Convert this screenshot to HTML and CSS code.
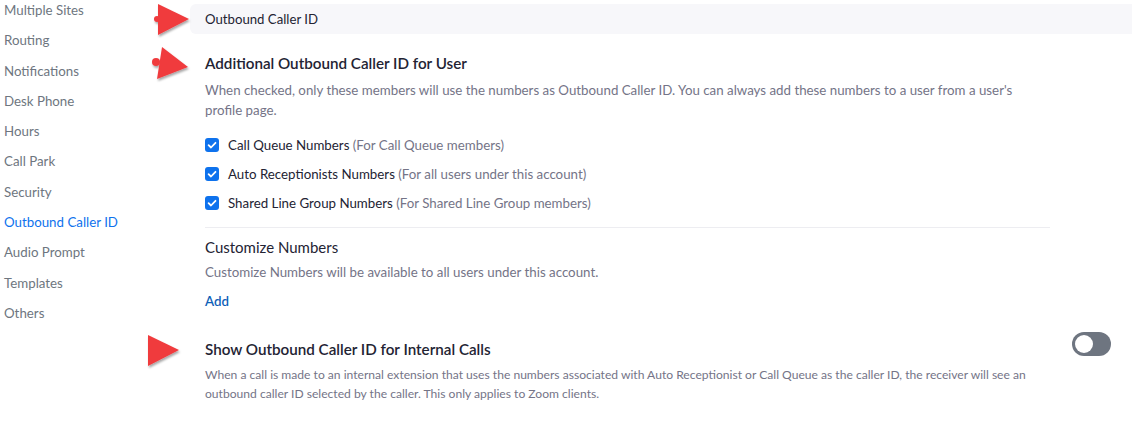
FILE: index.html
```html
<!DOCTYPE html>
<html>
<head>
<meta charset="utf-8">
<link rel="stylesheet" href="styles.css">
</head>
<body>
<div class="page">
  <nav class="sidebar">
    <div class="nav-item">Multiple Sites</div>
    <div class="nav-item">Routing</div>
    <div class="nav-item">Notifications</div>
    <div class="nav-item">Desk Phone</div>
    <div class="nav-item">Hours</div>
    <div class="nav-item">Call Park</div>
    <div class="nav-item">Security</div>
    <div class="nav-item active">Outbound Caller ID</div>
    <div class="nav-item">Audio Prompt</div>
    <div class="nav-item">Templates</div>
    <div class="nav-item">Others</div>
  </nav>
  <main class="main">
    <div class="section-header">Outbound Caller ID</div>

    <section class="setting">
      <h2 class="setting-title">Additional Outbound Caller ID for User</h2>
      <p class="setting-desc">When checked, only these members will use the numbers as Outbound Caller ID. You can always add these numbers to a user from a user's profile page.</p>
      <div class="checks">
        <label class="check-row"><span class="checkbox"><svg viewBox="0 0 14 14" width="14" height="14"><path d="M3.6 7.2 L6 9.5 L10.5 4.8" fill="none" stroke="#fff" stroke-width="1.8" stroke-linecap="round" stroke-linejoin="round"/></svg></span>Call Queue Numbers <span class="muted">(For Call Queue members)</span></label>
        <label class="check-row"><span class="checkbox"><svg viewBox="0 0 14 14" width="14" height="14"><path d="M3.6 7.2 L6 9.5 L10.5 4.8" fill="none" stroke="#fff" stroke-width="1.8" stroke-linecap="round" stroke-linejoin="round"/></svg></span>Auto Receptionists Numbers <span class="muted">(For all users under this account)</span></label>
        <label class="check-row"><span class="checkbox"><svg viewBox="0 0 14 14" width="14" height="14"><path d="M3.6 7.2 L6 9.5 L10.5 4.8" fill="none" stroke="#fff" stroke-width="1.8" stroke-linecap="round" stroke-linejoin="round"/></svg></span>Shared Line Group Numbers <span class="muted">(For Shared Line Group members)</span></label>
      </div>
      <div class="divider"></div>
      <h3 class="sub-title">Customize Numbers</h3>
      <p class="sub-desc">Customize Numbers will be available to all users under this account.</p>
      <a class="add-link">Add</a>
    </section>

    <section class="setting toggle-setting">
      <div class="toggle-text">
        <h2 class="setting-title">Show Outbound Caller ID for Internal Calls</h2>
        <p class="setting-desc small">When a call is made to an internal extension that uses the numbers associated with Auto Receptionist or Call Queue as the caller ID, the receiver will see an outbound caller ID selected by the caller. This only applies to Zoom clients.</p>
      </div>
      <span class="toggle"><span class="knob"></span></span>
    </section>
  </main>

  <svg class="arrow arrow-1" width="44" height="40" viewBox="0 0 44 40">
    <defs><filter id="sh1" x="-30%" y="-30%" width="160%" height="160%"><feDropShadow dx="1" dy="2" stdDeviation="1.3" flood-color="#000" flood-opacity="0.35"/></filter></defs>
    <g filter="url(#sh1)" fill="#f03a3e">
      <circle cx="6" cy="18" r="3"/>
      <polygon points="7,3 7,34 38,18"/>
    </g>
  </svg>
  <svg class="arrow arrow-2" width="44" height="40" viewBox="0 0 44 40">
    <defs><filter id="sh2" x="-30%" y="-30%" width="160%" height="160%"><feDropShadow dx="1" dy="2" stdDeviation="1.3" flood-color="#000" flood-opacity="0.35"/></filter></defs>
    <g filter="url(#sh2)" fill="#f03a3e">
      <circle cx="7" cy="15" r="4"/>
      <polygon points="13,0 8,32 39,20"/>
    </g>
  </svg>
  <svg class="arrow arrow-3" width="44" height="40" viewBox="0 0 44 40">
    <defs><filter id="sh3" x="-30%" y="-30%" width="160%" height="160%"><feDropShadow dx="1" dy="2" stdDeviation="1.3" flood-color="#000" flood-opacity="0.35"/></filter></defs>
    <g filter="url(#sh3)" fill="#f03a3e">
      <polygon points="4,3 4,34 35,18"/>
    </g>
  </svg>
</div>
</body>
</html>
```

FILE: styles.css
```css
* { box-sizing: border-box; }
html, body { margin: 0; padding: 0; background: #fff; }
body {
  font-family: Lato, "Open Sans", "Liberation Sans", sans-serif;
  color: #232333;
  width: 1132px;
  height: 430px;
  overflow: hidden;
}
.page {
  position: relative;
  display: flex;
  align-items: flex-start;
}
.sidebar {
  width: 190px;
  flex: none;
  padding-left: 4px;
  margin-top: -5px;
}
.nav-item {
  font-size: 13.3px;
  line-height: 30.3px;
  height: 30.3px;
  color: #6e7680;
}
.nav-item.active { color: #0e72ed; }

.main {
  flex: 1;
  padding-top: 4px;
}
.section-header {
  height: 30px;
  line-height: 30px;
  background: #f7f7fa;
  border-radius: 6px 0 0 6px;
  padding-left: 15px;
  font-size: 13.2px;
  color: #232333;
}
.setting {
  padding-left: 15px;
  width: 875px;
}
.setting-title {
  margin: 19px 0 0;
  font-size: 15.2px;
  line-height: 20px;
  font-weight: 600;
  color: #232333;
}
.setting-desc {
  margin: 7px 0 0;
  font-size: 13.3px;
  line-height: 20px;
  color: #747487;
  max-width: 845px;
}
.setting-desc.small {
  font-size: 12.1px;
}
.checks {
  margin-top: 15px;
  display: flex;
  flex-direction: column;
  gap: 9px;
}
.check-row {
  display: flex;
  align-items: center;
  height: 20px;
  font-size: 13.3px;
  color: #232333;
  white-space: pre;
}
.muted { color: #747487; }
.checkbox {
  width: 14px;
  height: 14px;
  border-radius: 3px;
  background: #0e72ed;
  margin-right: 9px;
  display: flex;
}
.divider {
  margin-top: 14px;
  height: 1px;
  background: #ededf1;
  width: 845px;
}
.sub-title {
  margin: 9px 0 0;
  font-size: 15px;
  line-height: 20px;
  font-weight: 400;
  color: #232333;
}
.sub-desc {
  margin: 5px 0 0;
  font-size: 13.3px;
  line-height: 20px;
  color: #747487;
}
.add-link {
  display: block;
  margin-top: 9px;
  font-size: 13.3px;
  line-height: 20px;
  font-weight: 600;
  color: #0e5fb8;
}
.toggle-setting {
  width: 921px;
  display: flex;
  align-items: flex-start;
  justify-content: space-between;
  margin-top: 28px;
}
.toggle-setting .setting-title { margin-top: 0; }
.toggle-setting .setting-desc { margin-top: 6px; line-height: 19px; }
.toggle-text { width: 845px; }
.toggle {
  margin-top: -7px;
  width: 39px;
  height: 24px;
  border-radius: 12px;
  background: #6e7580;
  position: relative;
  flex: none;
}
.knob {
  position: absolute;
  left: 3px;
  top: 3px;
  width: 18px;
  height: 18px;
  border-radius: 50%;
  background: #fff;
}
.arrow { position: absolute; }
.arrow-1 { left: 151px; top: 1px; }
.arrow-2 { left: 149px; top: 47px; }
.arrow-3 { left: 144px; top: 332px; }
```
